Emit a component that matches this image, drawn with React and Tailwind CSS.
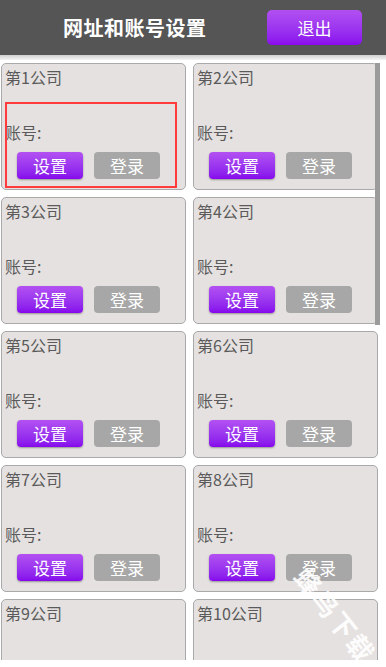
import React from 'react';

const companies = Array.from({ length: 10 }, (_, i) => `第${i + 1}公司`);

function CompanyCard({ name }) {
  return (
    <div className="h-[127px] rounded-[5px] border border-[#a9a9a9] bg-[#e5e1e0] flex flex-col">
      <div className="pl-[3px] pt-[3px] text-[16px] leading-[20px] text-[#5a5a5a]">{name}</div>
      <div className="pl-[3px] mt-[35px] text-[16px] leading-[20px] text-[#5a5a5a]">账号:</div>
      <div className="flex gap-[11px] pl-[15px] mt-[10px]">
        <button className="w-[66px] h-[27px] rounded-[4px] bg-gradient-to-b from-[#b350f2] to-[#8605ec] text-white text-[17px] leading-none shadow-[0_1px_2px_rgba(0,0,0,0.35)]">设置</button>
        <button className="w-[66px] h-[27px] rounded-[4px] bg-[#a7a7a7] text-white text-[17px] leading-none">登录</button>
      </div>
    </div>
  );
}

export default function App() {
  return (
    <div className="relative w-[386px] h-[667px] overflow-hidden bg-white" style={{ fontFamily: '"Noto Sans CJK SC", "Noto Sans", sans-serif' }}>
      {/* header */}
      <div className="h-[55px] bg-[#555555] flex items-center">
        <h1 className="pl-[63px] text-[20px] font-bold text-white tracking-[0.5px]">网址和账号设置</h1>
        <button className="ml-auto mr-[24px] w-[95px] h-[35px] rounded-[5px] bg-gradient-to-b from-[#b24ff1] to-[#8a07ee] text-white text-[17px] leading-none">退出</button>
      </div>
      <div className="h-[5px] bg-gradient-to-b from-[#cfcfcf] to-[#f4f4f4]" />

      {/* cards */}
      <div className="h-[600px] overflow-hidden">
        <div className="grid grid-cols-[185px_185px] gap-x-[7px] gap-y-[7px] pl-px pt-[3px]">
          {companies.map((c) => (
            <CompanyCard key={c} name={c} />
          ))}
        </div>
      </div>

      {/* scrollbar */}
      <div className="absolute left-[375px] top-[63px] w-[5px] h-[262px] bg-[#9b9b9b]" />

      {/* red highlight */}
      <div className="absolute left-[5px] top-[102px] w-[172px] h-[86px] border-2 border-[#ff3b3b]" />

      {/* watermark */}
      <div className="absolute left-[280px] top-[595px] rotate-[52deg] text-[26px] font-bold text-white/90 tracking-[2px] whitespace-nowrap">蜂鸟下载</div>
    </div>
  );
}
